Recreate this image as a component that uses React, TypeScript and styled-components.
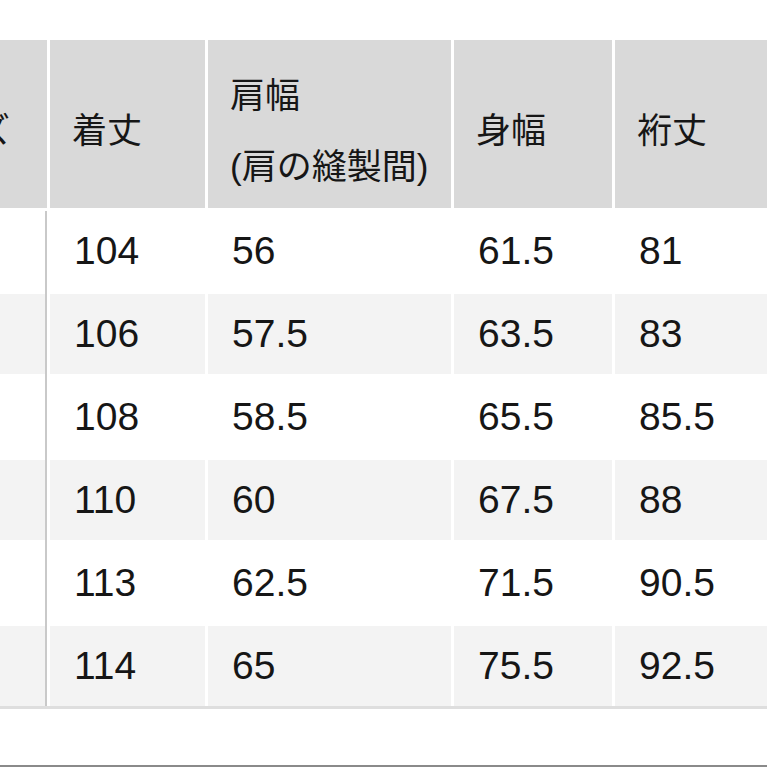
import { useLayoutEffect, useRef } from "react";
import styled, { createGlobalStyle } from "styled-components";

const rows = [
  ["104", "56", "61.5", "81"],
  ["106", "57.5", "63.5", "83"],
  ["108", "58.5", "65.5", "85.5"],
  ["110", "60", "67.5", "88"],
  ["113", "62.5", "71.5", "90.5"],
  ["114", "65", "75.5", "92.5"],
];

const headers = [["着丈"], ["肩幅", "(肩の縫製間)"], ["身幅"], ["裄丈"]];

const App = () => {
  const scrollRef = useRef<HTMLDivElement>(null);

  // the chart is shown scrolled sideways, only the end of the size column peeks out
  useLayoutEffect(() => {
    if (scrollRef.current) scrollRef.current.scrollLeft = 116;
  }, []);

  return (
    <Page>
      <GlobalStyle />
      <Scroller ref={scrollRef}>
        <Table>
          <SideColumn>
            <HeaderCell>
              <HeaderLine>サイズ</HeaderLine>
            </HeaderCell>
            <SideBody>
              {rows.map((_, i) => (
                <BodyCell key={i} $striped={i % 2 === 1} />
              ))}
            </SideBody>
          </SideColumn>
          <Grid>
            {headers.map((lines, i) => (
              <HeaderCell key={i}>
                <div>
                  {lines.map((l) => (
                    <HeaderLine key={l}>{l}</HeaderLine>
                  ))}
                </div>
              </HeaderCell>
            ))}
            {rows.map((row, r) =>
              row.map((value, c) => (
                <BodyCell key={`${r}-${c}`} $striped={r % 2 === 1}>
                  {value}
                </BodyCell>
              ))
            )}
          </Grid>
        </Table>
      </Scroller>
    </Page>
  );
};

export default App;

const GlobalStyle = createGlobalStyle`
  html, body {
    margin: 0;
    padding: 0;
    background: #ffffff;
  }
  body {
    font-family: "Liberation Sans", "Noto Sans CJK JP", sans-serif;
    color: #161616;
  }
`;

const Page = styled.div`
  height: 767px;
  box-sizing: border-box;
  padding-top: 40px;
  border-bottom: 2px solid #8a8a8a;
  overflow: hidden;
`;

const Scroller = styled.div`
  overflow-x: auto;
  scrollbar-width: none;
  &::-webkit-scrollbar {
    display: none;
  }
`;

const Table = styled.div`
  display: flex;
  gap: 3px;
  width: max-content;
  border-bottom: 3px solid #dedede;
`;

const SideColumn = styled.div`
  display: flex;
  flex-direction: column;
  gap: 3px;
  width: 163px;
`;

const SideBody = styled.div`
  display: flex;
  flex-direction: column;
  gap: 3px;
  border-right: 2px solid #c9c9c9;
`;

const Grid = styled.div`
  display: grid;
  grid-template-columns: 155px 243px 158px 160px;
  grid-auto-rows: 80px;
  grid-template-rows: 168px;
  gap: 3px;
`;

const HeaderCell = styled.div`
  height: 168px;
  box-sizing: border-box;
  display: flex;
  align-items: center;
  padding: 13px 22px 0;
  background: #d9d9d9;
  font-size: 35px;
`;

const HeaderLine = styled.div`
  line-height: 71px;
  white-space: nowrap;
`;

const BodyCell = styled.div<{ $striped: boolean }>`
  height: 80px;
  box-sizing: border-box;
  display: flex;
  align-items: center;
  padding: 0 22px 0 24px;
  background: ${(p) => (p.$striped ? "#f3f3f3" : "#ffffff")};
  font-size: 39px;
  white-space: nowrap;
`;
